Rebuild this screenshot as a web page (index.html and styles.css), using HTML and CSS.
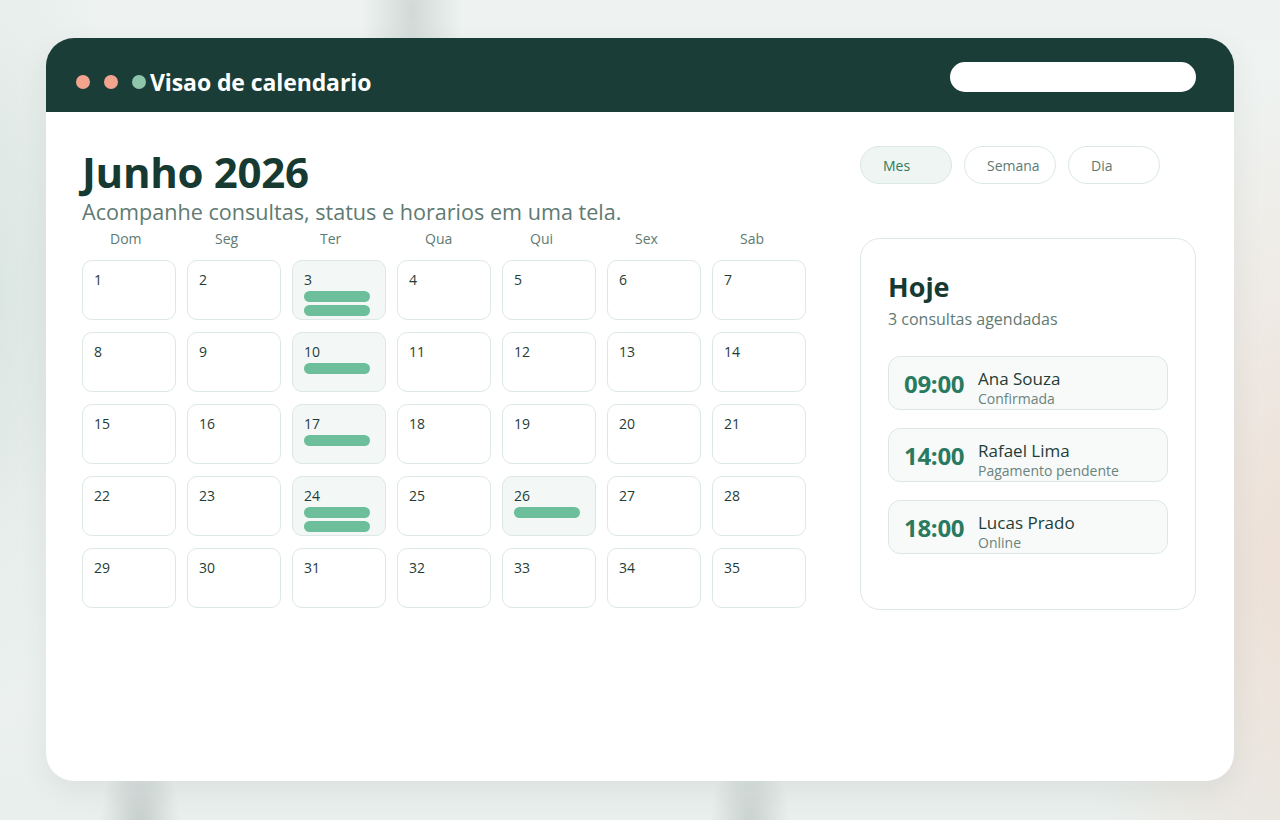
FILE: index.html
```html
<!DOCTYPE html>
<html lang="pt">
<head>
<meta charset="utf-8">
<title>Visao de calendario</title>
<link rel="stylesheet" href="styles.css">
</head>
<body>
<div class="backdrop">
  <div class="window">
    <header class="titlebar">
      <div class="brand">
        <div class="dots">
          <span class="dot dot-red"></span>
          <span class="dot dot-red"></span>
          <span class="dot dot-green"></span>
        </div>
        <h1 class="app-title">Visao de calendario</h1>
      </div>
      <div class="search"></div>
    </header>
    <main class="content">
      <section class="calendar">
        <h2 class="month">Junho 2026</h2>
        <p class="subtitle">Acompanhe consultas, status e horarios em uma tela.</p>
        <div class="weekdays">
          <span>Dom</span><span>Seg</span><span>Ter</span><span>Qua</span><span>Qui</span><span>Sex</span><span>Sab</span>
        </div>
        <div class="grid">
          <div class="cell"><span class="num">1</span></div>
          <div class="cell"><span class="num">2</span></div>
          <div class="cell busy"><span class="num">3</span><span class="bar"></span><span class="bar"></span></div>
          <div class="cell"><span class="num">4</span></div>
          <div class="cell"><span class="num">5</span></div>
          <div class="cell"><span class="num">6</span></div>
          <div class="cell"><span class="num">7</span></div>
          <div class="cell"><span class="num">8</span></div>
          <div class="cell"><span class="num">9</span></div>
          <div class="cell busy"><span class="num">10</span><span class="bar"></span></div>
          <div class="cell"><span class="num">11</span></div>
          <div class="cell"><span class="num">12</span></div>
          <div class="cell"><span class="num">13</span></div>
          <div class="cell"><span class="num">14</span></div>
          <div class="cell"><span class="num">15</span></div>
          <div class="cell"><span class="num">16</span></div>
          <div class="cell busy"><span class="num">17</span><span class="bar"></span></div>
          <div class="cell"><span class="num">18</span></div>
          <div class="cell"><span class="num">19</span></div>
          <div class="cell"><span class="num">20</span></div>
          <div class="cell"><span class="num">21</span></div>
          <div class="cell"><span class="num">22</span></div>
          <div class="cell"><span class="num">23</span></div>
          <div class="cell busy"><span class="num">24</span><span class="bar"></span><span class="bar"></span></div>
          <div class="cell"><span class="num">25</span></div>
          <div class="cell busy"><span class="num">26</span><span class="bar"></span></div>
          <div class="cell"><span class="num">27</span></div>
          <div class="cell"><span class="num">28</span></div>
          <div class="cell"><span class="num">29</span></div>
          <div class="cell"><span class="num">30</span></div>
          <div class="cell"><span class="num">31</span></div>
          <div class="cell"><span class="num">32</span></div>
          <div class="cell"><span class="num">33</span></div>
          <div class="cell"><span class="num">34</span></div>
          <div class="cell"><span class="num">35</span></div>
        </div>
      </section>
      <aside class="side">
        <div class="views">
          <button class="view active">Mes</button>
          <button class="view">Semana</button>
          <button class="view">Dia</button>
        </div>
        <div class="today">
          <h3 class="today-title">Hoje</h3>
          <p class="today-sub">3 consultas agendadas</p>
          <ul class="appts">
            <li class="appt"><span class="time">09:00</span><div class="who"><span class="name">Ana Souza</span><span class="status">Confirmada</span></div></li>
            <li class="appt"><span class="time">14:00</span><div class="who"><span class="name">Rafael Lima</span><span class="status">Pagamento pendente</span></div></li>
            <li class="appt"><span class="time">18:00</span><div class="who"><span class="name">Lucas Prado</span><span class="status">Online</span></div></li>
          </ul>
        </div>
      </aside>
    </main>
  </div>
</div>
</body>
</html>
```

FILE: styles.css
```css
* { box-sizing: border-box; }
html, body { margin: 0; padding: 0; }
body {
  font-family: "Open Sans", "Noto Sans", sans-serif;
  color: #1f3d36;
  width: 1280px;
  height: 820px;
  overflow: hidden;
}
.backdrop {
  width: 1280px;
  height: 820px;
  padding: 38px 46px 39px 46px;
  background:
    radial-gradient(ellipse 50px 150px at 412px 10px, rgba(190,200,198,0.6), rgba(190,200,198,0) 100%),
    radial-gradient(ellipse 40px 90px at 140px 830px, rgba(180,190,188,0.7), rgba(180,190,188,0) 100%),
    radial-gradient(ellipse 40px 90px at 750px 830px, rgba(185,195,192,0.7), rgba(185,195,192,0) 100%),
    radial-gradient(ellipse 220px 500px at 1290px 560px, rgba(236,222,212,0.95), rgba(236,222,212,0) 100%),
    radial-gradient(ellipse 160px 420px at -20px 300px, rgba(214,226,222,0.9), rgba(214,226,222,0) 100%),
    linear-gradient(180deg, #eef3f1 0%, #f2f5f4 60%, #e9efed 100%);
}
.window {
  width: 1188px;
  height: 743px;
  background: #ffffff;
  border-radius: 28px;
  overflow: hidden;
  box-shadow: 0 10px 30px rgba(40, 70, 60, 0.08);
  display: flex;
  flex-direction: column;
}
.titlebar {
  height: 74px;
  flex: none;
  background: #1a3d37;
  display: flex;
  align-items: center;
  padding: 4px 38px 0 30px;
}
.brand {
  display: flex;
  align-items: center;
  padding-top: 10px;
}
.dots { display: flex; gap: 14px; align-items: center; }
.dot { width: 14px; height: 14px; border-radius: 50%; display: block; }
.dot-red { background: #f3a48f; }
.dot-green { background: #8ec6ab; }
.app-title {
  margin: 0 0 0 4px;
  color: #ffffff;
  font-size: 23px;
  line-height: 30px;
  font-weight: 700;
  letter-spacing: -0.1px;
}
.search {
  margin-left: auto;
  width: 246px;
  height: 30px;
  border-radius: 15px;
  background: #ffffff;
}
.content {
  flex: 1;
  display: grid;
  grid-template-columns: 724px 336px;
  column-gap: 54px;
  padding: 34px 38px 0 36px;
  align-items: start;
}
.calendar { display: flex; flex-direction: column; }
.month {
  margin: 0;
  font-size: 42px;
  line-height: 52px;
  font-weight: 700;
  color: #163a32;
  letter-spacing: -0.3px;
}
.subtitle {
  margin: 0;
  font-size: 21.6px;
  line-height: 28px;
  color: #5f7a72;
}
.weekdays {
  display: grid;
  grid-template-columns: repeat(7, 94px);
  column-gap: 11px;
  height: 22px;
  margin-top: 2px;
  margin-bottom: 10px;
}
.weekdays span {
  padding-left: 28px;
  font-size: 14px;
  line-height: 22px;
  color: #5d7a72;
}
.grid {
  display: grid;
  grid-template-columns: repeat(7, 94px);
  grid-auto-rows: 60px;
  column-gap: 11px;
  row-gap: 12px;
}
.cell {
  border: 1px solid #dde8e4;
  border-radius: 10px;
  background: #ffffff;
  padding: 9px 12px 0 11px;
  display: flex;
  flex-direction: column;
}
.cell.busy { background: #f3f8f6; }
.num {
  font-size: 14px;
  line-height: 20px;
  color: #1f3d36;
}
.bar {
  display: block;
  width: 66px;
  height: 11px;
  border-radius: 6px;
  background: #6cbf9a;
  margin-top: 1px;
}
.bar + .bar { margin-top: 3px; }
.side { display: flex; flex-direction: column; }
.views { display: flex; gap: 12px; height: 38px; }
.view {
  height: 38px;
  width: 92px;
  border-radius: 19px;
  border: 1px solid #dbe8e3;
  background: #ffffff;
  font-family: inherit;
  font-size: 14px;
  color: #5d7a72;
  padding: 0 0 0 22px;
  text-align: left;
}
.view.active { background: #eef5f2; color: #2f7a5e; }
.today {
  margin-top: 54px;
  height: 372px;
  border: 1px solid #dde8e4;
  border-radius: 20px;
  padding: 30px 27px 0 27px;
}
.today-title {
  margin: 0;
  font-size: 27px;
  line-height: 36px;
  font-weight: 700;
  color: #163a32;
}
.today-sub {
  margin: 0;
  font-size: 16px;
  line-height: 28px;
  color: #5f7a72;
}
.appts {
  list-style: none;
  margin: 23px 0 0 0;
  padding: 0;
  display: flex;
  flex-direction: column;
  gap: 18px;
}
.appt {
  height: 54px;
  border: 1px solid #dde8e4;
  border-radius: 12px;
  background: #f7faf9;
  display: flex;
  align-items: center;
  padding: 0 15px;
  gap: 12px;
}
.time {
  font-size: 24px;
  font-weight: 700;
  color: #2a7a60;
  width: 62px;
  line-height: 30px;
  margin-top: 2px;
  letter-spacing: -0.3px;
}
.who { display: flex; flex-direction: column; margin-top: 9px; }
.name { font-size: 17px; line-height: 22px; color: #1f3d36; }
.status { font-size: 14px; line-height: 18px; color: #6a837c; }
```
